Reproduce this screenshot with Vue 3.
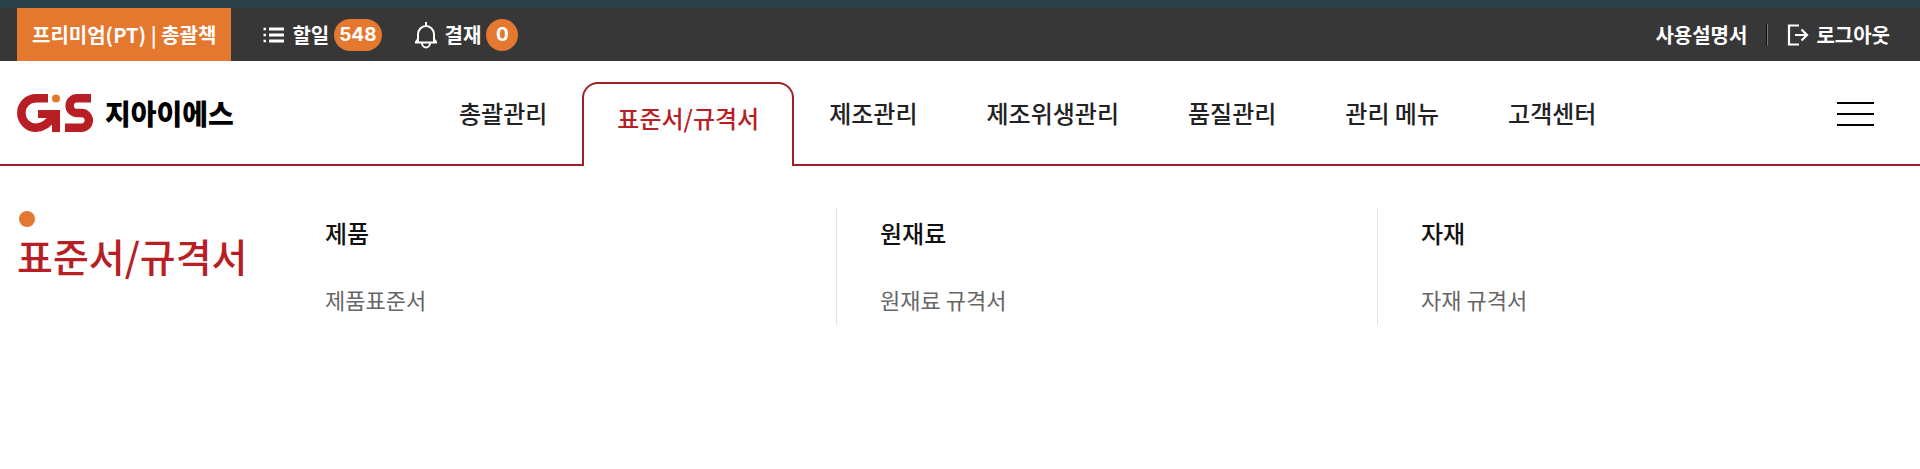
<script setup>
    import { ref } from 'vue';

    const todoCount = ref(548);
    const approvalCount = ref(0);
    const activeMenu = ref('표준서/규격서');

    const menus = ['총괄관리', '표준서/규격서', '제조관리', '제조위생관리', '품질관리', '관리 메뉴', '고객센터'];

    const groups = [
        { title: '제품', links: ['제품표준서'] },
        { title: '원재료', links: ['원재료 규격서'] },
        { title: '자재', links: ['자재 규격서'] },
    ];
</script>

<template>
    <div class="page">
        <div class="top-bar">
            <div class="top-group">
                <a href="#" class="grade">프리미엄(PT) | 총괄책</a>
                <a href="#" class="top-link">
                    <svg class="icon-list" viewBox="0 0 22 16" aria-hidden="true">
                        <path d="M6 2h15M6 8h15M6 14h15" stroke="currentColor" stroke-width="2.8" />
                        <path d="M0.500 2h2.500M0.500 8h2.500M0.500 14h2.500" stroke="currentColor" stroke-width="2.4" />
                    </svg>
                    할일
                    <span class="count">{{ todoCount }}</span>
                </a>
                <a href="#" class="top-link">
                    <svg class="icon-bell" viewBox="0 0 24 28" fill="none" stroke="currentColor" stroke-width="2" aria-hidden="true">
                        <path d="M12 1v4M1 21.500h22M4 21V13.500a8 8.500 0 0 1 16 0V21M8 22a4 4.500 0 0 0 8 0M4 18l-2.500 3.500M20 18l2.500 3.500" />
                    </svg>
                    결재
                    <span class="count">{{ approvalCount }}</span>
                </a>
            </div>
            <div class="top-group top-right">
                <a href="#" class="top-text">사용설명서</a>
                <span class="bar"></span>
                <a href="#" class="top-text logout">
                    <svg class="icon-logout" viewBox="0 0 22 22" fill="none" stroke="currentColor" stroke-width="2.2" aria-hidden="true">
                        <path d="M12 1.500H2v19h10M8 11h12M14.500 5.500l5.500 5.500-5.500 5.500" />
                    </svg>
                    로그아웃
                </a>
            </div>
        </div>

        <header class="header">
            <a href="#" class="logo">
                <svg class="logo-mark" viewBox="0 0 76 38" aria-hidden="true">
                    <g fill="none" stroke="#b81f25" stroke-width="8.500">
                        <path d="M31 4.300H19a14.700 14.700 0 0 0 0 29.400q10 0 18-12" />
                        <path d="M74 4.300H60a7.350 7.350 0 0 0 0 14.700h4.500a7.350 7.350 0 0 1 0 14.700H48" />
                    </g>
                    <path d="M21 16h22v22h-8V24H21z" fill="#b81f25" />
                    <circle cx="39" cy="4.500" r="4" fill="#e5782f" />
                </svg>
                <span class="logo-name">지아이에스</span>
            </a>
            <nav class="menu" aria-label="주 메뉴">
                <a
                    v-for="menu in menus"
                    :key="menu"
                    href="#"
                    class="menu-item"
                    :class="{ active: menu === activeMenu }"
                    @click.prevent="activeMenu = menu"
                >{{ menu }}</a>
            </nav>
            <button type="button" class="all-menu" aria-label="전체 메뉴">
                <span></span>
                <span></span>
                <span></span>
            </button>
        </header>

        <main class="panel">
            <h1 class="panel-title">{{ activeMenu }}</h1>
            <div class="groups">
                <section v-for="group in groups" :key="group.title" class="group">
                    <h2>{{ group.title }}</h2>
                    <ul>
                        <li v-for="link in group.links" :key="link">
                            <a href="#">{{ link }}</a>
                        </li>
                    </ul>
                </section>
            </div>
        </main>
    </div>
</template>

<style>
    body {
        margin: 0;
        background: #fff;
    }
</style>

<style scoped>
    .page {
        font-family: "Noto Sans CJK KR", sans-serif;
        font-weight: 500;
        color: #222;
    }

    a {
        color: inherit;
        text-decoration: none;
    }

    .top-bar {
        display: flex;
        justify-content: space-between;
        height: 53px;
        padding: 0 30px 0 17px;
        border-top: 8px solid #2a4046;
        background: #373737;
        color: #fff;
        font-size: 20px;
        font-weight: 700;
    }

    .top-group {
        display: flex;
        align-items: center;
        gap: 32px;
    }

    .grade {
        padding: 0 15px;
        background: #e5782f;
        line-height: 53px;
    }

    .top-link {
        display: flex;
        align-items: center;
        gap: 5px;
    }

    .icon-list {
        width: 22px;
        height: 16px;
        margin-right: 2px;
    }

    .icon-bell {
        width: 24px;
        height: 28px;
        margin-right: 2px;
    }

    .count {
        box-sizing: border-box;
        min-width: 32px;
        padding: 0 5px;
        border-radius: 16px;
        background: #e5782f;
        font-family: Inter, sans-serif;
        font-size: 19px;
        line-height: 32px;
        text-align: center;
    }

    .top-right {
        gap: 19px;
    }

    .bar {
        width: 1px;
        height: 22px;
        border-right: 1px solid #777;
        background: #111;
    }

    .logout {
        display: flex;
        align-items: center;
        gap: 7px;
    }

    .icon-logout {
        width: 22px;
        height: 22px;
    }

    .header {
        display: flex;
        height: 103px;
        padding: 0 46px 0 17px;
        border-bottom: 2px solid #9c2126;
    }

    .logo {
        display: flex;
        align-items: center;
        gap: 12px;
        width: 408px;
        color: #000;
        font-size: 28px;
        font-weight: 900;
    }

    .logo-mark {
        width: 76px;
        height: 38px;
    }

    .menu {
        display: flex;
        align-items: flex-end;
        gap: 1px;
        font-size: 24px;
    }

    .menu-item {
        padding: 0 34px;
        line-height: 102px;
    }

    .menu-item.active {
        margin-bottom: -2px;
        padding: 0 33px 14px;
        border: 2px solid #9c2126;
        border-bottom: 0;
        border-radius: 16px 16px 0 0;
        background: #fff;
        color: #b81f25;
        line-height: 68px;
    }

    .all-menu {
        display: flex;
        flex-direction: column;
        justify-content: center;
        gap: 9px;
        width: 37px;
        margin-left: auto;
        padding: 2px 0 0;
        border: 0;
        background: none;
    }

    .all-menu span {
        height: 2px;
        background: #000;
    }

    .panel {
        display: flex;
        padding: 42px 2px 0 17px;
    }

    .panel-title {
        flex: none;
        width: 278px;
        margin: 0;
        color: #b81f25;
        font-size: 39px;
        font-weight: 500;
        line-height: 56px;
    }

    .panel-title::before {
        content: "";
        display: block;
        width: 16px;
        height: 16px;
        margin: 3px 0 0 2px;
        border-radius: 50%;
        background: #e5782f;
    }

    .groups {
        display: grid;
        flex: 1;
        grid-template-columns: repeat(3, 1fr);
    }

    .group {
        padding: 7px 0 9px 43px;
        border-left: 1px solid #e2e2e2;
    }

    .group:first-child {
        padding-left: 30px;
        border-left: 0;
    }

    .group h2 {
        margin: 0 0 32px;
        color: #111;
        font-size: 24px;
        font-weight: 500;
        line-height: 36px;
    }

    .group ul {
        margin: 0;
        padding: 0;
        list-style: none;
    }

    .group li {
        color: #666;
        font-size: 22px;
        font-weight: 400;
        line-height: 33px;
    }
</style>
